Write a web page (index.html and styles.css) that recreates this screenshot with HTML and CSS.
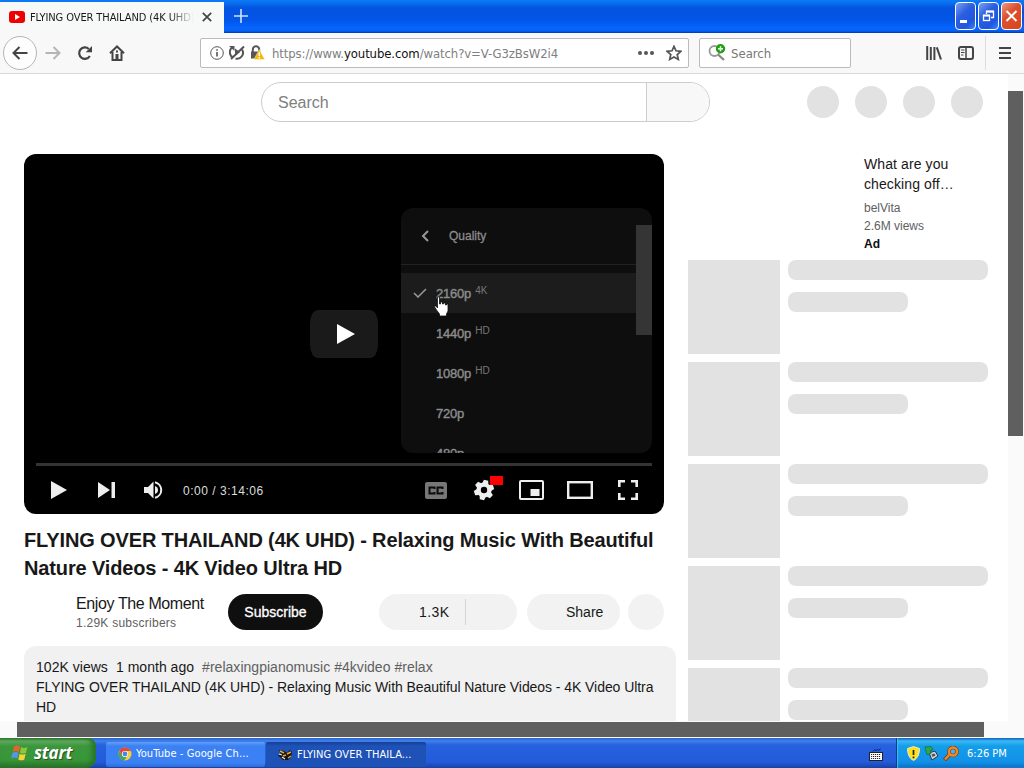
FILE: index.html
```html
<!DOCTYPE html>
<html lang="en">
<head>
  <meta charset="UTF-8">
  <meta name="viewport" content="width=device-width, initial-scale=1.0">
  <title>FLYING OVER THAILAND (4K UHD)</title>
  <link rel="stylesheet" href="styles.css">
</head>
<body>
  <!-- window title bar -->
  <div class="titlebar">
    <div class="tab">
      <svg class="tab-logo" width="16" height="12" viewBox="0 0 16 12"><rect width="16" height="12" rx="3" fill="#f00000"/><path d="M6 3l5 3-5 3z" fill="#fff"/></svg>
      <span class="tab-title">FLYING OVER THAILAND (4K UHD)</span>
      <svg width="10" height="10" viewBox="0 0 10 10"><path d="M.8.8l8.400 8.400M9.200.8L.8 9.200" stroke="#444" stroke-width="1.700"/></svg>
    </div>
    <svg class="new-tab" width="14" height="14" viewBox="0 0 14 14"><path d="M7 0v14M0 7h14" stroke="#cfe2ff" stroke-width="1.600"/></svg>
    <div class="window-buttons">
      <div class="wbtn"><svg width="19" height="26"><path d="M4 18.500h7" stroke="#fff" stroke-width="3"/></svg></div>
      <div class="wbtn"><svg width="19" height="26" fill="none" stroke="#fff"><path d="M7.500 11V8.500h7v6H12" stroke-width="1.300"/><path d="M7 8.500h8M4 12.500h7" stroke-width="1.800"/><rect x="4.500" y="12.500" width="6" height="5" stroke-width="1.300"/></svg></div>
      <div class="wbtn close"><svg width="19" height="26"><path d="M4.500 8l10 10M14.500 8l-10 10" stroke="#fff" stroke-width="2"/></svg></div>
    </div>
  </div>

  <!-- navigation toolbar -->
  <div class="toolbar">
    <div class="back"><svg width="16" height="14" viewBox="0 0 16 14" fill="none" stroke="#444" stroke-width="2"><path d="M15.500 7H1.500M7.500 1l-6 6 6 6"/></svg></div>
    <svg class="forward" width="16" height="14" viewBox="0 0 16 14" fill="none" stroke="#b5b5b5" stroke-width="2"><path d="M.5 7h14M8.500 1l6 6-6 6"/></svg>
    <svg class="reload" width="16" height="16" viewBox="0 0 16 16" fill="none"><path d="M12.800 11A5.700 5.700 0 1 1 11.800 4" stroke="#444" stroke-width="2.200"/><path d="M15 1v6.300H8.700z" fill="#444"/></svg>
    <svg class="home" width="16" height="16" viewBox="0 0 16 16"><path d="M1 8.200L8 1.500l7 6.700" fill="none" stroke="#444" stroke-width="2"/><path d="M3.500 7v8h9V7" fill="none" stroke="#444" stroke-width="2"/><rect x="6.500" y="9" width="3" height="6" fill="#444"/><path d="M7 5.500h2v2H7z" fill="#444"/></svg>
    <div class="urlbar">
      <svg width="14" height="14" viewBox="0 0 14 14" fill="none" stroke="#555"><circle cx="7" cy="7" r="6.300"/><path d="M7 6v4.500M7 3.200v1.500" stroke-width="1.600"/></svg>
      <svg width="16" height="15" viewBox="0 0 16 15" fill="none" stroke="#555"><path d="M3.800 2A6 6 0 0 0 4 12.500M6.500 13.600A6 6 0 0 0 13 4.500" stroke-width="2"/><path d="M0 1h5.500v5z" fill="#555" stroke="none"/><path d="M6 3.500l5 3.500-5 4z" fill="#555" stroke="none"/><path d="M2 14L15 1.500" stroke-width="2"/></svg>
      <svg width="15" height="15" viewBox="0 0 15 15"><path d="M2.800 7V4.500a3.200 3.200 0 0 1 6.400 0V7" fill="none" stroke="#555" stroke-width="2"/><path d="M1 6.500h9v7H1z" fill="#555"/><path d="M9.300 4.500l5.500 10h-11z" fill="#f8b70c" stroke="#fff" stroke-width=".4"/><path d="M9.300 7.500v3.500M9.300 12v1.400" stroke="#fff" stroke-width="1.400"/></svg>
      <span class="url">https://www.<b>youtube.com</b>/watch?v=V-G3zBsW2i4</span>
      <svg class="dots" width="16" height="4" viewBox="0 0 16 4" fill="#555"><circle cx="2" cy="2" r="2"/><circle cx="8" cy="2" r="2"/><circle cx="14" cy="2" r="2"/></svg>
      <svg width="16" height="16" viewBox="0 0 16 16"><path d="M8 1.300l2 4.500 4.900.5-3.700 3.200 1.100 4.900L8 11.900l-4.300 2.500 1.100-4.900L1.100 6.300 6 5.800z" fill="none" stroke="#555" stroke-width="1.700"/></svg>
    </div>
    <div class="searchbar">
      <svg width="18" height="17" viewBox="0 0 18 17"><circle cx="6.500" cy="7" r="5" fill="none" stroke="#999" stroke-width="1.800"/><path d="M10 10.500l6 5.500" stroke="#888" stroke-width="2.300"/><circle cx="12.500" cy="4.700" r="4.700" fill="#20a010"/><path d="M12.500 2.200v5M10 4.700h5" stroke="#fff" stroke-width="1.500"/></svg>
      <span>Search</span>
    </div>
    <svg class="library" width="16" height="14" viewBox="0 0 16 14" stroke="#444" stroke-width="2"><path d="M1.200 0v14M4.800 1v13M8.400 1v13M10.800 1.300L15 13.500"/></svg>
    <svg class="sidebar-icon" width="16" height="14" viewBox="0 0 16 14" fill="none" stroke="#444"><rect x="1" y="1" width="14" height="12" rx="2" stroke-width="2"/><path d="M8 1v12" stroke-width="1.500"/><path d="M3 4h3.500M3 6.500h3.500M3 9h2.500"/></svg>
    <div class="menu"><svg width="12" height="12" viewBox="0 0 12 12" stroke="#444" stroke-width="2"><path d="M0 1h12M0 6h12M0 11h12"/></svg></div>
  </div>

  <!-- web page -->
  <div class="viewport">
    <div class="page">
      <div class="masthead">
        <div class="yt-search"><span>Search</span><div class="yt-search-btn"></div></div>
        <div class="circles"><i></i><i></i><i></i><i></i></div>
      </div>
      <div class="columns">
        <div class="primary">
          <div class="player">
            <div class="big-play"><svg width="18" height="20" viewBox="0 0 18 20"><path d="M0 0l18 10L0 20z" fill="#fff"/></svg></div>
            <div class="quality">
              <div class="quality-head"><svg width="8" height="12" viewBox="0 0 8 12"><path d="M7 1L2 6l5 5" fill="none" stroke="#999" stroke-width="2"/></svg><span>Quality</span></div>
              <div class="quality-list">
                <div class="item active"><svg width="14" height="10" viewBox="0 0 14 10"><path d="M1 5l4 4 8-8" fill="none" stroke="#999" stroke-width="1.500"/></svg>2160p<sup>4K</sup></div>
                <div class="item">1440p<sup>HD</sup></div>
                <div class="item">1080p<sup>HD</sup></div>
                <div class="item">720p</div>
                <div class="item">480p</div>
              </div>
              <div class="quality-scroll"></div>
            </div>
            <svg class="pointer" width="16" height="21" viewBox="0 0 16 21"><path d="M4.500 1h2v7h1V6h2v2h1V7h2v2h1V8h1.500v7l-1.500 3v2h-7v-2l-3-4-2.500-4h2l1.500 2z" fill="#fff" stroke="#111" stroke-width=".8"/></svg>
            <div class="controls">
              <div class="progress"></div>
              <div class="buttons">
                <svg class="play" width="16" height="18" viewBox="0 0 16 18"><path d="M0 0l16 9-16 9z" fill="#eee"/></svg>
                <svg class="next" width="17" height="16" viewBox="0 0 17 16" fill="#eee"><path d="M0 0l12 8-12 8zM13.500 0H17v16h-3.500z"/></svg>
                <svg class="volume" width="19" height="18" viewBox="0 0 19 18"><path d="M0 6h4l5.500-5.500v17L4 12H0z" fill="#eee"/><path d="M11 5v8q3-1.200 3-4t-3-4z" fill="#eee"/><path d="M11 1.200a8 8 0 0 1 0 15.600" fill="none" stroke="#eee" stroke-width="2"/></svg>
                <span class="time">0:00 / 3:14:06</span>
                <svg class="cc" width="22" height="17" viewBox="0 0 22 17"><rect width="22" height="17" rx="2" fill="#777"/><path d="M9.500 7V5.500h-5v6h5V10M17.500 7V5.500h-5v6h5V10" fill="none" stroke="#0c0c0c" stroke-width="2"/></svg>
                <div class="gear">
                  <svg width="22" height="22" viewBox="-11 -11 22 22"><g fill="#eee" transform="rotate(12)"><circle r="7.500"/><path id="tooth" d="M-2.200-10h4.400l1 4h-6.400z"/><use href="#tooth" transform="rotate(60)"/><use href="#tooth" transform="rotate(120)"/><use href="#tooth" transform="rotate(180)"/><use href="#tooth" transform="rotate(240)"/><use href="#tooth" transform="rotate(300)"/></g><circle r="3.200" fill="#000"/></svg>
                  <div class="badge"></div>
                </div>
                <svg class="mini" width="25" height="20" viewBox="0 0 25 20"><rect x="1" y="1" width="23" height="18" rx="1" fill="none" stroke="#eee" stroke-width="2"/><path d="M11.500 9h9v7h-9z" fill="#eee"/></svg>
                <svg class="theater" width="26" height="18" viewBox="0 0 26 18"><rect x="1.200" y="1.200" width="23.600" height="15.600" fill="none" stroke="#eee" stroke-width="2.400"/></svg>
                <svg class="full" width="20" height="20" viewBox="0 0 20 20"><path d="M1.300 7V1.300H7M13 1.300h5.700V7M18.700 13v5.700H13M7 18.700H1.300V13" fill="none" stroke="#eee" stroke-width="2.600"/></svg>
              </div>
            </div>
          </div>
          <h1>FLYING OVER THAILAND (4K UHD) - Relaxing Music With Beautiful Nature Videos - 4K Video Ultra HD</h1>
          <div class="meta">
            <div class="owner">
              <div class="owner-name">Enjoy The Moment</div>
              <div class="owner-subs">1.29K subscribers</div>
            </div>
            <div class="subscribe">Subscribe</div>
            <div class="likes"><span>1.3K</span></div>
            <div class="share">Share</div>
            <div class="more"></div>
          </div>
          <div class="description">
            <div class="info"><span class="views">102K views</span><span class="date">1 month ago</span><span class="tags">#relaxingpianomusic #4kvideo #relax</span></div>
            <div class="text">FLYING OVER THAILAND (4K UHD) - Relaxing Music With Beautiful Nature Videos - 4K Video Ultra HD</div>
          </div>
        </div>
        <div class="secondary">
          <div class="ad">
            <div class="ad-title">What are you checking off…</div>
            <div>belVita</div>
            <div>2.6M views</div>
            <b>Ad</b>
          </div>
          <div class="ghost"><div class="thumb"></div><div><div class="line"></div><div class="line short"></div></div></div>
          <div class="ghost"><div class="thumb"></div><div><div class="line"></div><div class="line short"></div></div></div>
          <div class="ghost"><div class="thumb"></div><div><div class="line"></div><div class="line short"></div></div></div>
          <div class="ghost"><div class="thumb"></div><div><div class="line"></div><div class="line short"></div></div></div>
          <div class="ghost"><div class="thumb"></div><div><div class="line"></div><div class="line short"></div></div></div>
        </div>
      </div>
    </div>
    <div class="vscroll"><div class="vthumb"></div></div>
    <div class="hscroll"><div class="hthumb"></div></div>
  </div>

  <!-- taskbar -->
  <div class="taskbar">
    <div class="start">
      <svg width="18" height="18" viewBox="0 0 18 18"><path d="M3 2.500q3-2 6 0L7.800 8q-3-1.800-6 0z" fill="#e8622c"/><path d="M10 3q3 2 6.500 0L15 8.700q-3 1.700-6 0z" fill="#8cc63a"/><path d="M1.500 9q3-1.800 6 0l-1.300 5.500q-3-1.800-6 0z" fill="#5a94ee"/><path d="M8.700 9.700q3 1.800 6 0L13.300 15.500q-3 1.700-6 0z" fill="#fbd038"/></svg>
      <span>start</span>
    </div>
    <div class="task">
      <svg width="14" height="14" viewBox="0 0 14 14"><circle cx="7" cy="7" r="6.500" fill="#f6cd3d"/><path d="M1.300 3.700A6.500 6.500 0 0 1 12.700 3.900H7L4.200 8.600z" fill="#e1493b"/><path d="M1.200 4A6.500 6.500 0 0 0 6.300 13.500L9.500 8.500 4 8z" fill="#47a65a"/><circle cx="7" cy="7" r="3.100" fill="#fff"/><circle cx="7" cy="7" r="2.400" fill="#4a84e8"/></svg>
      <span>YouTube - Google Ch...</span>
    </div>
    <div class="task pressed">
      <svg width="15" height="13" viewBox="0 0 15 13"><path d="M1 2l5 1 3 2 3-3 2 2-1 5-3 3H5L2 9 0 8l3-2z" fill="#19130d"/><path d="M2 3l4 2M9 6l4-2M5 8l3-1M10 10l3-2" stroke="#e9a73a" stroke-width="1.500"/><path d="M4 9l3 2M1 6l3 1" stroke="#eee" stroke-width="1.200"/></svg>
      <span>FLYING OVER THAILA...</span>
    </div>
    <svg class="keyboard" width="14" height="14" viewBox="0 0 14 14"><path d="M4 4.500l1.500-2 1.500 1.500 1.500-2L10 3.500l1.500-2" fill="none" stroke="#112a66"/><rect x=".5" y="5.500" width="13" height="8" fill="#fff" stroke="#222"/><path d="M2 7.500h10M2 9.500h10M2 11.500h10" stroke="#222" stroke-dasharray="1.200 .8"/></svg>
    <div class="tray">
      <svg width="13" height="15" viewBox="0 0 13 15"><path d="M6.500.5l6 2q0 9-6 12-6-3-6-12z" fill="#ffe01b" stroke="#e8e8d0"/><path d="M6.500 4v5M6.500 10.500v1.700" stroke="#222" stroke-width="1.700"/></svg>
      <svg width="15" height="15" viewBox="0 0 15 15"><path d="M5 7l6-2 3 5-6 4z" fill="#ccd4d8" stroke="#334"/><path d="M7.500 8.500l3-1 1 2-3 1.500z" fill="#456"/><path d="M1 1l6-.5 2 3-3 1 1 3-4 1z" fill="#2fa84a" stroke="#136b2a" stroke-width=".7"/></svg>
      <svg width="16" height="15" viewBox="0 0 16 15"><path d="M1.500 14l5.500-6" stroke="#7a3d0c" stroke-width="4"/><circle cx="10" cy="5.500" r="4" fill="#4db0ee" stroke="#7a3d0c" stroke-width="3.600"/><circle cx="10" cy="5.500" r="4" fill="none" stroke="#f08a24" stroke-width="2.400"/><path d="M2 13.500l5-5.500" stroke="#f08a24" stroke-width="2.400"/></svg>
      <span>6:26 PM</span>
    </div>
  </div>
</body>
</html>
```
FILE: styles.css
```css
* {
  box-sizing: border-box;
}

body {
  display: flex;
  flex-direction: column;
  width: 1024px;
  height: 768px;
  margin: 0;
  overflow: hidden;
  background-color: #fff;
  font-family: "Liberation Sans", Arial, sans-serif;
  color: #181818;
}

svg {
  display: block;
  flex: none;
}

/* title bar */
.titlebar {
  display: flex;
  height: 33px;
  flex: none;
  padding-top: 2px;
  background: linear-gradient(#0a7bf5 0, #0a6ff0 3px, #0453e0 8px, #0355e8 20px, #0566ff 28px, #0560f5 31px, #0034a8 33px);
  font-family: "DejaVu Sans Condensed", "DejaVu Sans", sans-serif;
}

.tab {
  display: flex;
  align-items: center;
  width: 224px;
  padding: 0 12px 2px 9px;
  background-color: #f7f8f8;
}

.tab-title {
  flex: 1;
  margin: 2px 8px 0 5px;
  overflow: hidden;
  white-space: nowrap;
  font-size: 11px;
  letter-spacing: -0.1px;
  -webkit-mask-image: linear-gradient(90deg, #000 85%, transparent);
  mask-image: linear-gradient(90deg, #000 85%, transparent);
}

.new-tab {
  margin: 7px 0 0 10px;
}

.window-buttons {
  display: flex;
  gap: 2px;
  margin-left: auto;
  padding-right: 2px;
}

.wbtn {
  width: 21px;
  height: 28px;
  border: 1px solid #fff;
  border-radius: 4px;
  background: linear-gradient(135deg, #7aa0f2, #2b5ee0 40%, #2057e0 75%, #3f82f8);
}

.wbtn.close {
  background: linear-gradient(135deg, #ee9a80, #dc5030 40%, #d9441c);
}

/* toolbar */
.toolbar {
  display: flex;
  align-items: center;
  height: 41px;
  flex: none;
  padding: 0 0 1px 3px;
  border-bottom: 1px solid #d8d8d8;
  background-color: #f8f8f8;
  font-family: "DejaVu Sans Condensed", "DejaVu Sans", sans-serif;
  font-size: 13px;
}

.back {
  display: flex;
  align-items: center;
  justify-content: center;
  width: 34px;
  height: 34px;
  border: 1px solid #b5b5b5;
  border-radius: 50%;
  background-color: #fdfdfd;
}

.forward {
  margin-left: 8px;
}

.reload {
  margin-left: 16px;
}

.home {
  margin-left: 16px;
}

.urlbar,
.searchbar {
  display: flex;
  align-items: center;
  height: 30px;
  border: 1px solid #bbb;
  border-radius: 2px;
  background-color: #fff;
}

.urlbar {
  width: 489px;
  margin-left: 75px;
  padding: 0 6px 0 9px;
  gap: 5px;
}

.url {
  margin: 1px 0 0 2px;
  white-space: nowrap;
  letter-spacing: -0.1px;
  color: #808080;
}

.url b {
  font-weight: normal;
  color: #111;
}

.dots {
  margin: 0 7px 0 auto;
}

.searchbar {
  width: 152px;
  margin-left: 10px;
  padding-left: 8px;
  gap: 5px;
  color: #777;
}

.searchbar span {
  padding-top: 1px;
}

.library {
  margin-left: 75px;
}

.sidebar-icon {
  margin-left: 16px;
}

.menu {
  display: flex;
  align-items: center;
  height: 34px;
  margin-left: 11px;
  padding-left: 13px;
  border-left: 1px solid #ddd;
}

/* page */
.viewport {
  display: grid;
  grid-template-columns: 1008px 16px;
  grid-template-rows: 647px 17px;
  flex: none;
  height: 664px;
}

.page {
  overflow: hidden;
}

.masthead {
  display: flex;
  height: 56px;
  align-items: center;
  padding: 0 25px 0 261px;
}

.yt-search {
  display: flex;
  width: 449px;
  height: 40px;
  overflow: hidden;
  border: 1px solid #ccc;
  border-radius: 20px;
  font-size: 16px;
  line-height: 40px;
  color: #808080;
}

.yt-search span {
  flex: 1;
  padding-left: 16px;
}

.yt-search-btn {
  width: 63px;
  border-left: 1px solid #ccc;
  background-color: #f8f8f8;
}

.circles {
  display: flex;
  gap: 16px;
  margin-left: auto;
}

.circles i {
  width: 32px;
  height: 32px;
  border-radius: 50%;
  background-color: #e2e2e2;
}

.columns {
  display: flex;
  gap: 12px;
  padding: 24px 0 0 24px;
}

.primary {
  width: 652px;
}

.player {
  position: relative;
  display: flex;
  flex-direction: column;
  justify-content: flex-end;
  width: 640px;
  height: 360px;
  border-radius: 12px;
  background-color: #000;
}

.big-play {
  position: absolute;
  left: 286px;
  top: 156px;
  width: 68px;
  height: 48px;
  padding: 14px 0 0 27px;
  border-radius: 8px / 13px;
  background-color: #1a1a1a;
}

/* settings popup lies over the video */
.quality {
  position: absolute;
  left: 377px;
  top: 54px;
  width: 251px;
  height: 245px;
  overflow: hidden;
  border-radius: 12px;
  background-color: #0e0e0e;
  color: #8c8c8c;
  font-size: 13px;
}

.quality-head {
  display: flex;
  align-items: center;
  gap: 20px;
  height: 57px;
  padding-left: 20px;
  border-bottom: 1px solid #222;
  font-size: 12px;
  -webkit-text-stroke: 0.3px #8c8c8c;
}

.quality-list {
  width: 235px;
  padding-top: 8px;
}

.item {
  display: flex;
  align-items: center;
  height: 40px;
  padding-left: 35px;
  letter-spacing: -0.2px;
  -webkit-text-stroke: 0.4px #8c8c8c;
}

.item.active {
  padding-left: 12px;
  background-color: #1c1c1c;
}

.item svg {
  margin-right: 9px;
}

.item sup {
  margin: -4px 0 0 4px;
  font-size: 10px;
  line-height: 10px;
  letter-spacing: 0;
  color: #777;
  -webkit-text-stroke: 0;
}

.quality-scroll {
  position: absolute;
  right: 0;
  top: 17px;
  width: 16px;
  height: 110px;
  background-color: #353535;
}

.pointer {
  position: absolute;
  left: 409px;
  top: 142px;
}

.controls {
  padding: 0 12px;
}

.progress {
  height: 3px;
  background-color: #333;
}

.buttons {
  display: flex;
  align-items: center;
  height: 48px;
  padding: 0 14px 0 15px;
}

.next {
  margin-left: 31px;
}

.volume {
  margin-left: 29px;
}

.time {
  margin: 1px auto 0 20px;
  font-size: 12px;
  letter-spacing: 0.52px;
  color: #ddd;
}

.gear {
  position: relative;
  margin: 0 24px 0 26px;
}

.badge {
  position: absolute;
  right: -8px;
  top: -3px;
  width: 13px;
  height: 9px;
  background-color: #f00;
}

.theater {
  margin: 0 25px 0 23px;
}

h1 {
  width: 640px;
  margin: 12px 0;
  font-size: 20px;
  line-height: 28px;
  letter-spacing: -0.14px;
}

.meta {
  display: flex;
  height: 36px;
  padding-left: 52px;
  font-size: 14px;
  line-height: 36px;
}

.owner {
  width: 152px;
  white-space: nowrap;
}

.owner-name {
  font-size: 16px;
  line-height: 20px;
  letter-spacing: -0.38px;
}

.owner-subs {
  font-size: 12px;
  line-height: 18px;
  letter-spacing: 0.25px;
  color: #606060;
}

.subscribe {
  width: 95px;
  border-radius: 18px;
  background-color: #0f0f0f;
  color: #fff;
  text-align: center;
  -webkit-text-stroke: 0.3px #fff;
}

.likes {
  display: flex;
  align-items: center;
  width: 138px;
  margin-left: 56px;
  border-radius: 18px;
  background-color: #f2f2f2;
}

.likes span {
  width: 87px;
  padding-left: 40px;
  border-right: 1px solid #d5d5d5;
  line-height: 26px;
  letter-spacing: 0.4px;
}

.share {
  width: 93px;
  margin: 0 8px 0 10px;
  padding-left: 39px;
  border-radius: 18px;
  background-color: #f2f2f2;
}

.more {
  width: 36px;
  border-radius: 50%;
  background-color: #f2f2f2;
}

.description {
  height: 120px;
  margin-top: 16px;
  padding: 11px 12px;
  border-radius: 12px;
  background-color: #f1f1f1;
  font-size: 14px;
  line-height: 20px;
}

.info {
  letter-spacing: 0.03px;
}

.text {
  letter-spacing: -0.06px;
}

.date {
  margin: 0 8px;
}

.tags {
  color: #606060;
}

.secondary {
  width: 300px;
}

.ad {
  height: 106px;
  padding-left: 176px;
  font-size: 12px;
  line-height: 18px;
  color: #606060;
}

.ad-title {
  width: 100px;
  margin-bottom: 5px;
  font-size: 14px;
  line-height: 20px;
  letter-spacing: 0.1px;
  color: #181818;
}

.ad b {
  display: block;
  color: #0f0f0f;
}

.ghost {
  display: flex;
  gap: 8px;
  margin-bottom: 8px;
}

.thumb {
  width: 92px;
  height: 94px;
  background-color: #e2e2e2;
}

.line {
  width: 200px;
  height: 20px;
  margin-bottom: 12px;
  border-radius: 8px;
  background-color: #e2e2e2;
}

.line.short {
  width: 120px;
}

.vscroll {
  grid-row: span 2;
  padding: 17px 1px 0 0;
  background-color: #fafafa;
}

.vthumb {
  height: 345px;
  background-color: #5f5f5f;
}

.hscroll {
  padding: 1px 0 0 17px;
  background-color: #fafafa;
}

.hthumb {
  width: 967px;
  height: 15px;
  background-color: #5f5f5f;
}

/* taskbar */
.taskbar {
  display: flex;
  align-items: center;
  height: 30px;
  flex: none;
  background: linear-gradient(#2a62c8 0, #3f80ee 3px, #2761dc 7px, #235bdb 24px, #1941a5 30px);
  color: #fff;
  font-family: "DejaVu Sans Condensed", "DejaVu Sans", sans-serif;
  font-size: 11px;
}

.start {
  display: flex;
  align-items: center;
  gap: 5px;
  width: 96px;
  height: 30px;
  padding-left: 11px;
  border-radius: 0 8px 10px 0;
  background: linear-gradient(#2f7d2f 0, #62ac62 3px, #3c963c 8px, #389638 22px, #286e28 30px);
  box-shadow: inset -4px 0 5px #27752a;
  font-family: "Open Sans", "Noto Sans", sans-serif;
  font-size: 17px;
  font-weight: bold;
  font-style: italic;
  letter-spacing: -0.2px;
  text-shadow: 1px 1px 1px #234f23;
}

.start span {
  margin-top: -2px;
}

.task {
  display: flex;
  align-items: center;
  gap: 5px;
  width: 159px;
  height: 25px;
  margin: 2px 0 0 10px;
  padding-left: 12px;
  border-radius: 2px;
  background: linear-gradient(#63a0fb 0, #3c81f3 4px, #3c81f3 21px, #2f6bd8);
  white-space: nowrap;
}

.task span {
  margin: -2px 0 0 -1px;
  letter-spacing: 0.1px;
}

.task.pressed {
  width: 160px;
  margin-left: 1px;
  background: linear-gradient(#153f92 0, #1e52b7 4px, #1e52b7);
}

.task.pressed span {
  margin-top: 0;
}

.keyboard {
  margin: 1px 13px 0 auto;
}

.tray {
  display: flex;
  align-items: center;
  gap: 4px;
  width: 128px;
  height: 30px;
  padding-left: 10px;
  border-left: 1px solid #0a3a8a;
  background: linear-gradient(#0c59b9 0, #3cb8f5 3px, #139ee9 8px, #1290e8 24px, #0f6dc0 30px);
  box-shadow: inset 1px 0 1px #39c0f8;
}

.tray span {
  margin-left: 4px;
  white-space: nowrap;
}
```
